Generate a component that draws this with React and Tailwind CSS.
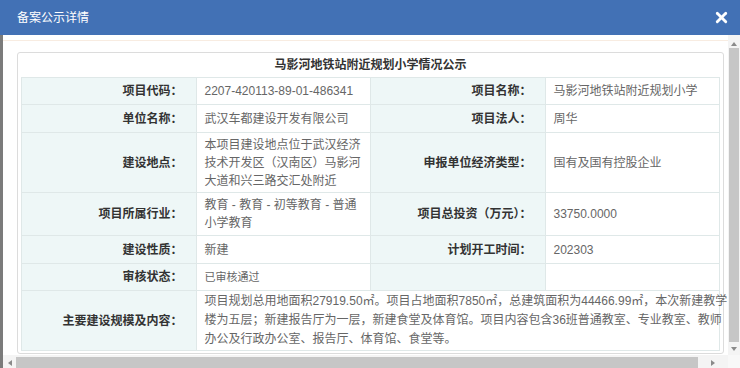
import React from "react";
import { X } from "lucide-react";

const Tri = ({ dir }) => {
  const pts = {
    up: "0,5 3,1 6,5",
    down: "0,1 6,1 3,5",
    left: "5,0 5,6 1,3",
    right: "1,0 1,6 5,3",
  }[dir];
  return (
    <svg width="6" height="6" viewBox="0 0 6 6">
      <polygon points={pts} fill="#8a8a8a" />
    </svg>
  );
};

const Label = ({ children }) => (
  <td className="bg-[#eef7f7] border border-[#dfe8e8] text-right pr-[13px] font-bold text-[#333] align-middle p-0">
    {children}
  </td>
);

const Value = ({ children, className = "", colSpan }) => (
  <td colSpan={colSpan} className={`border border-[#dfe8e8] pl-[8px] pr-[2px] py-0 text-[#666] align-middle whitespace-nowrap ${className}`}>
    {children}
  </td>
);

export default function App() {
  return (
    <div className="w-[740px] h-[368px] overflow-hidden bg-white flex flex-col font-['Liberation_Sans','Noto_Sans_CJK_SC',sans-serif]">
      {/* title bar */}
      <header className="h-[35px] shrink-0 bg-[#4271b5] flex items-center justify-between pl-[17px] pr-[10px]">
        <span className="text-white text-[12px] leading-none">备案公示详情</span>
        <X size={17} strokeWidth={4} className="text-white" />
      </header>

      <div className="flex flex-1 min-h-0">
        <div className="w-[3px] bg-[#7b7b7b]" />

        <div className="w-[725px] flex flex-col">
          <div className="h-[5px]" />
          <div className="flex-1 border-t border-[#f8ece1] pl-[14px] pr-[4px] pt-[11px]">
            <div className="border border-[#dcdcdc] rounded-[3px] px-[3px] pb-[2px]">
              <div className="h-[24px] flex items-center justify-center text-[12px] font-bold text-[#333]">
                马影河地铁站附近规划小学情况公示
              </div>
              <table className="w-full table-fixed border-collapse text-[12px] leading-[18px]">
                <colgroup>
                  <col className="w-1/4" />
                  <col className="w-1/4" />
                  <col className="w-1/4" />
                  <col className="w-1/4" />
                </colgroup>
                <tbody>
                  <tr className="h-[27px]">
                    <Label>项目代码：</Label>
                    <Value>2207-420113-89-01-486341</Value>
                    <Label>项目名称：</Label>
                    <Value>马影河地铁站附近规划小学</Value>
                  </tr>
                  <tr className="h-[28px]">
                    <Label>单位名称：</Label>
                    <Value>武汉车都建设开发有限公司</Value>
                    <Label>项目法人：</Label>
                    <Value>周华</Value>
                  </tr>
                  <tr className="h-[60px]">
                    <Label>建设地点：</Label>
                    <Value>
                      本项目建设地点位于武汉经济
                      <br />
                      技术开发区（汉南区）马影河
                      <br />
                      大道和兴三路交汇处附近
                    </Value>
                    <Label>申报单位经济类型：</Label>
                    <Value>国有及国有控股企业</Value>
                  </tr>
                  <tr className="h-[43px]">
                    <Label>项目所属行业：</Label>
                    <Value>
                      教育 - 教育 - 初等教育 - 普通
                      <br />
                      小学教育
                    </Value>
                    <Label>项目总投资（万元）：</Label>
                    <Value>33750.0000</Value>
                  </tr>
                  <tr className="h-[28px]">
                    <Label>建设性质：</Label>
                    <Value>新建</Value>
                    <Label>计划开工时间：</Label>
                    <Value>202303</Value>
                  </tr>
                  <tr className="h-[27px]">
                    <Label>审核状态：</Label>
                    <Value className="text-[11px]">已审核通过</Value>
                    <Label />
                    <Value />
                  </tr>
                  <tr className="h-[60px]">
                    <Label>主要建设规模及内容：</Label>
                    <Value colSpan={3} className="leading-[19px]">
                      项目规划总用地面积27919.50㎡。项目占地面积7850㎡，总建筑面积为44466.99㎡，本次新建教学
                      <br />
                      楼为五层；新建报告厅为一层，新建食堂及体育馆。项目内容包含36班普通教室、专业教室、教师
                      <br />
                      办公及行政办公室、报告厅、体育馆、食堂等。
                    </Value>
                  </tr>
                </tbody>
              </table>
            </div>
          </div>
        </div>

        {/* vertical scrollbar */}
        <div className="w-[12px] flex flex-col items-center bg-[#f4f4f4] pt-[5px]">
          <div className="h-[8px] flex items-center">
            <Tri dir="up" />
          </div>
          <div className="w-[10px] flex-1 bg-[#c6c6c6]" />
          <div className="h-[13px] flex items-center">
            <Tri dir="down" />
          </div>
        </div>
      </div>

      {/* horizontal scrollbar */}
      <div className="h-[13px] shrink-0 flex bg-[#f4f4f4]">
        <div className="w-[3px] bg-[#7b7b7b]" />
        <div className="w-[13px] flex items-center justify-center pt-[2px]">
          <Tri dir="left" />
        </div>
        <div className="w-[682px] mt-[2px] bg-[#c6c6c6]" />
        <div className="w-[30px] flex items-center justify-center pt-[2px]">
          <Tri dir="right" />
        </div>
        <div className="w-[12px] bg-[#f8f8f8]" />
      </div>
    </div>
  );
}
